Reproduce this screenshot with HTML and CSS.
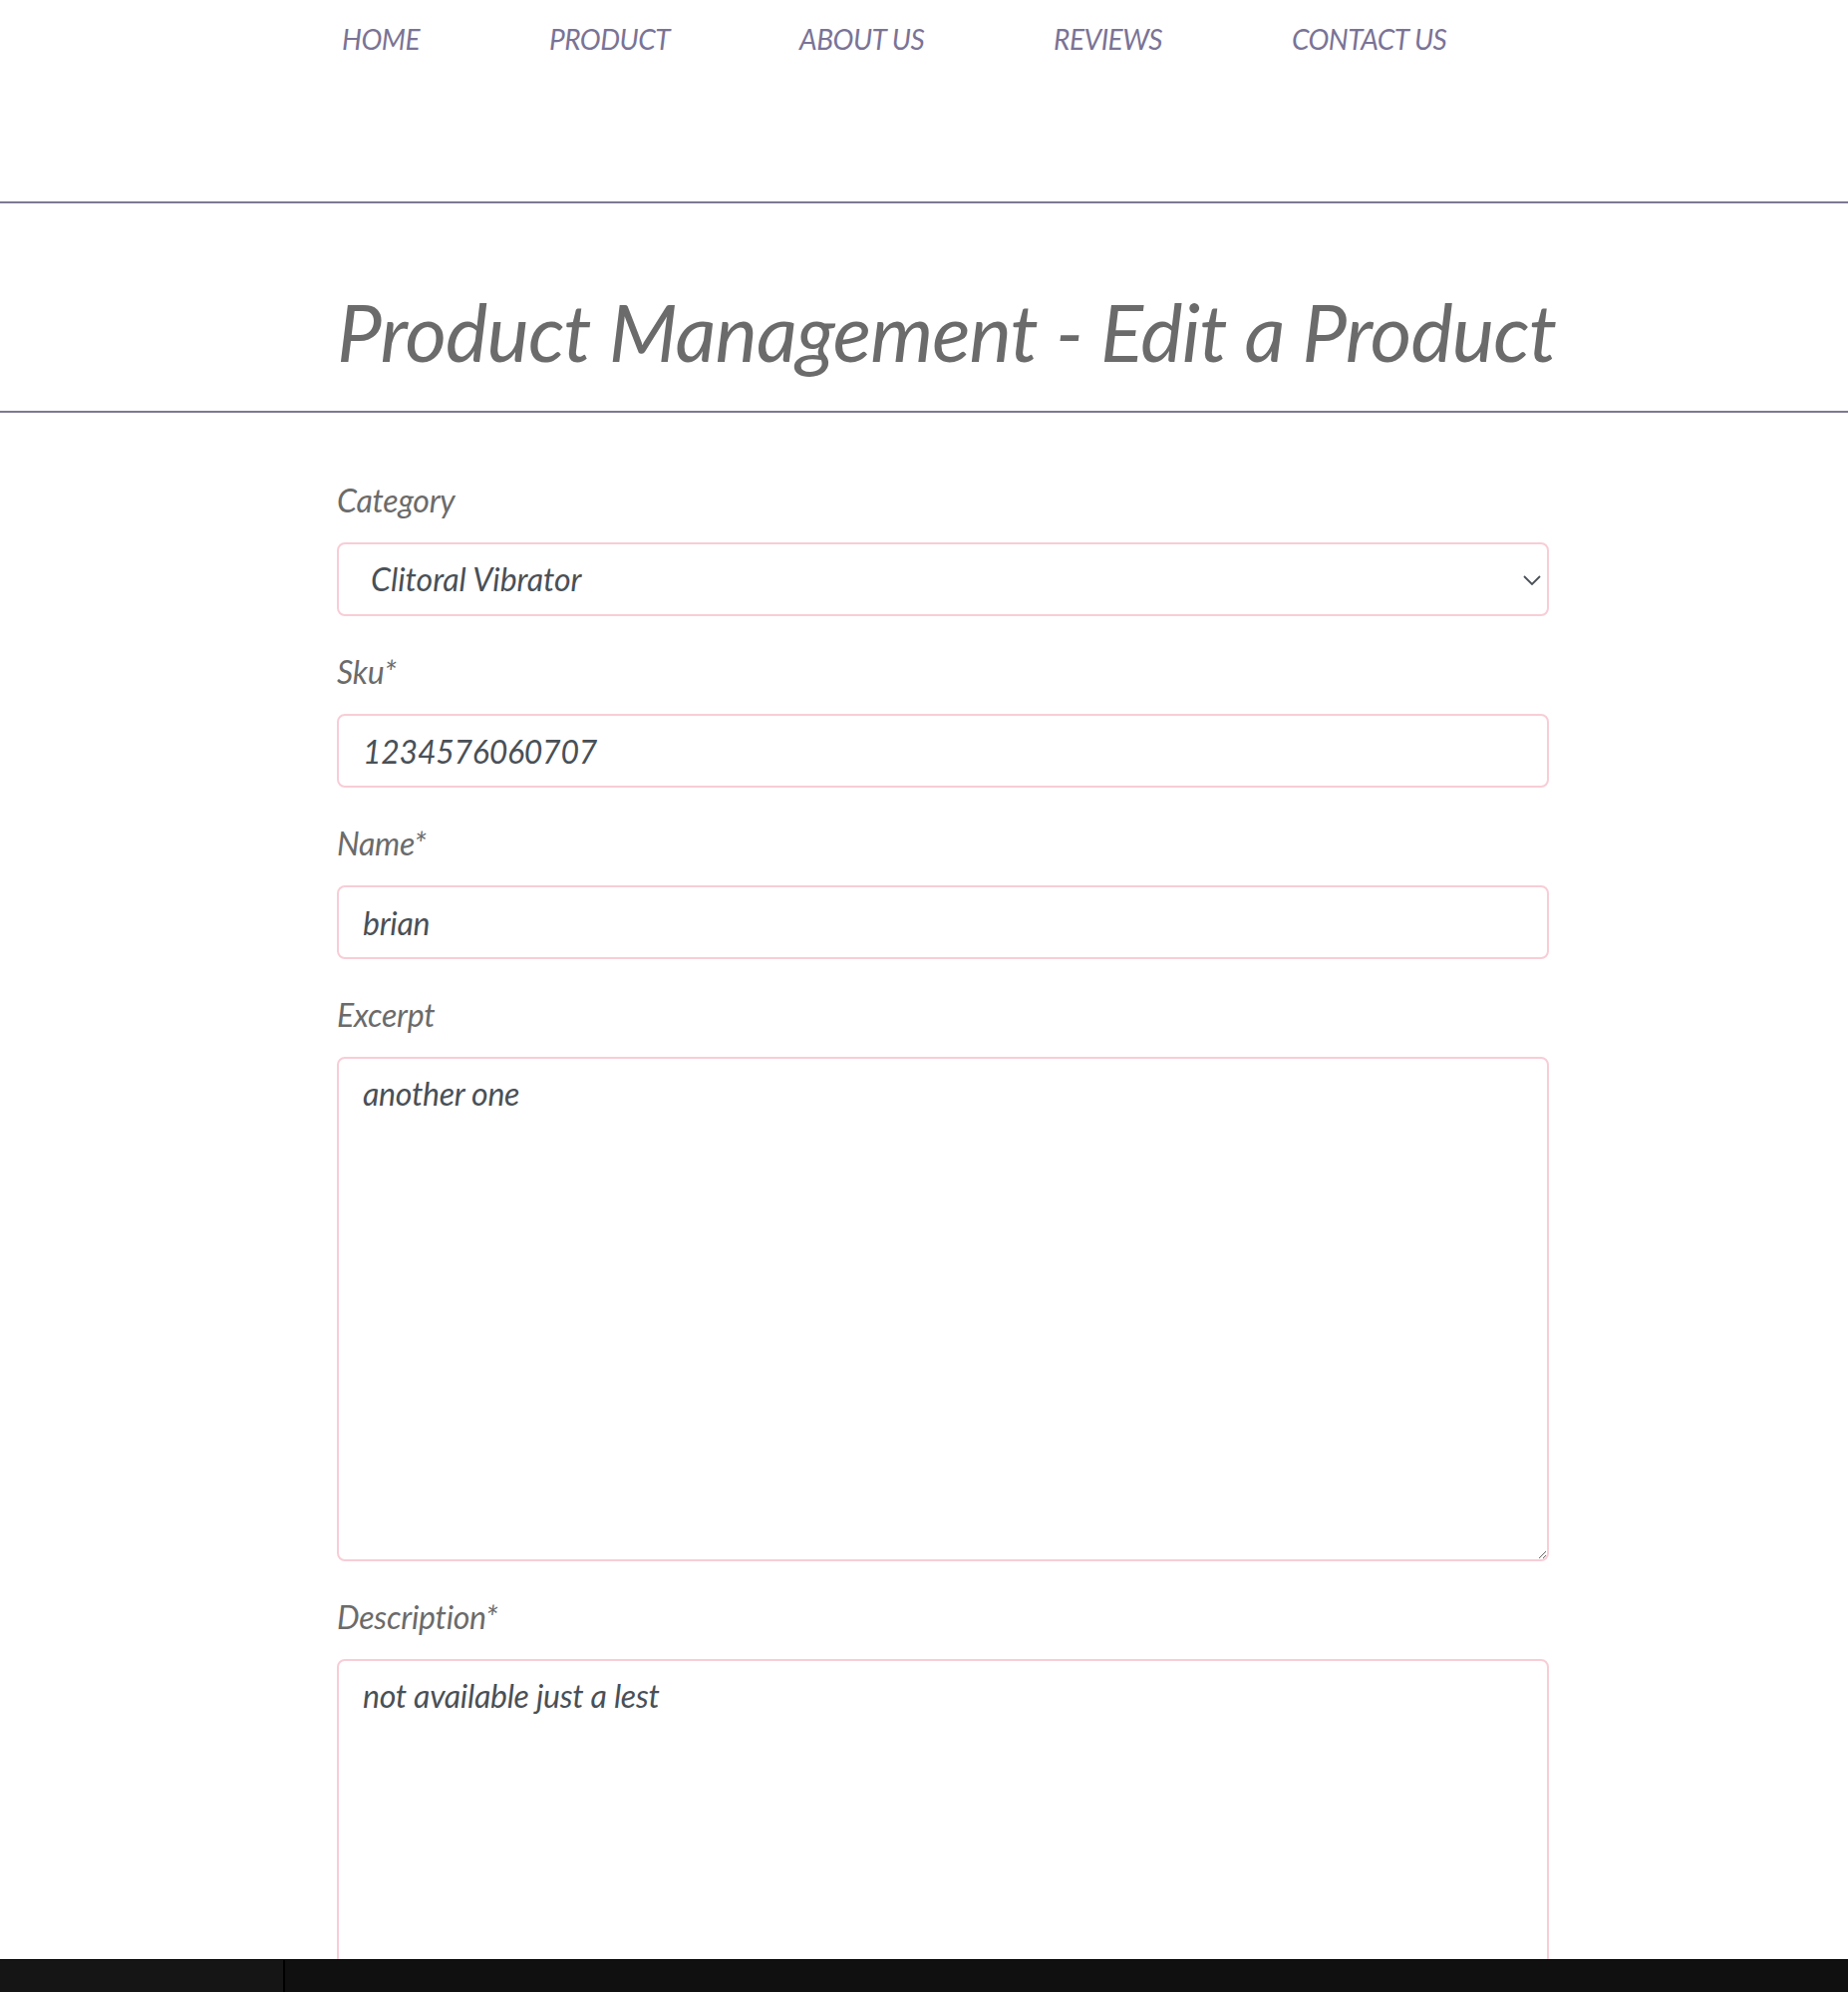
FILE: index.html
```html
<!DOCTYPE html>
<html lang="en">
<head>
<meta charset="utf-8">
<title>Product Management - Edit a Product</title>
<link rel="stylesheet" href="styles.css">
</head>
<body>
<header class="site-header">
  <nav class="main-nav">
    <a href="#" class="nav-link">HOME</a>
    <a href="#" class="nav-link">PRODUCT</a>
    <a href="#" class="nav-link">ABOUT US</a>
    <a href="#" class="nav-link">REVIEWS</a>
    <a href="#" class="nav-link">CONTACT US</a>
  </nav>
</header>
<section class="page-title">
  <div class="container">
    <h1 class="title">Product Management - Edit a Product</h1>
  </div>
</section>
<main class="form-section">
  <div class="container">
    <form class="product-form">
      <div class="form-group">
        <label class="form-label" for="category">Category</label>
        <div class="select-wrap">
          <select id="category" class="form-control select-control">
            <option>Clitoral Vibrator</option>
          </select>
          <svg class="chevron" width="18" height="10" viewBox="0 0 18 10" aria-hidden="true"><path d="M1 1 L9 9 L17 1" fill="none" stroke="#495057" stroke-width="1.8"/></svg>
        </div>
      </div>
      <div class="form-group">
        <label class="form-label" for="sku">Sku*</label>
        <input id="sku" class="form-control" type="text" value="1234576060707">
      </div>
      <div class="form-group">
        <label class="form-label" for="name">Name*</label>
        <input id="name" class="form-control" type="text" value="brian">
      </div>
      <div class="form-group">
        <label class="form-label" for="excerpt">Excerpt</label>
        <textarea id="excerpt" class="form-control text-area">another one</textarea>
      </div>
      <div class="form-group">
        <label class="form-label" for="description">Description*</label>
        <textarea id="description" class="form-control text-area">not available just a lest</textarea>
      </div>
    </form>
  </div>
</main>
<div class="bottom-bar">
  <div class="bar-left"></div>
  <div class="bar-right"></div>
</div>
</body>
</html>
```

FILE: styles.css
```css
html, body {
  margin: 0;
  padding: 0;
}
body {
  font-family: Lato, "Open Sans", sans-serif;
  font-style: italic;
  background: #ffffff;
  height: 1998px;
  overflow: hidden;
}
.site-header {
  height: 202px;
  border-bottom: 2px solid #7d7993;
  box-sizing: content-box;
}
.main-nav {
  display: flex;
  gap: 130px;
  padding: 19px 0 0 343px;
}
.nav-link {
  font-size: 28px;
  line-height: 40px;
  letter-spacing: -0.5px;
  color: #7a7396;
  text-decoration: none;
}
.page-title {
  border-bottom: 2px solid #7d7993;
  padding: 80px 0 32px;
}
.container {
  width: 1216px;
  margin-left: 338px;
}
.title {
  margin: 0;
  padding-right: 8px;
  font-size: 80px;
  line-height: 96px;
  font-weight: 400;
  font-style: italic;
  letter-spacing: -0.9px;
  color: #6b6b6b;
  text-align: center;
  white-space: nowrap;
}
.form-section {
  padding-top: 64px;
}
.form-group {
  margin-bottom: 32px;
}
.form-label {
  display: block;
  font-size: 32px;
  line-height: 48px;
  letter-spacing: -0.25px;
  color: #6b6b6b;
  margin-bottom: 18px;
}
.form-control {
  display: block;
  box-sizing: border-box;
  width: 100%;
  height: 74px;
  margin: 0;
  padding: 0 24px;
  font-family: Lato, "Open Sans", sans-serif;
  font-style: italic;
  font-size: 32px;
  line-height: 48px;
  letter-spacing: -0.25px;
  color: #495057;
  background: #ffffff;
  border: 2px solid #f8cdd6;
  border-radius: 8px;
  outline: none;
}
.select-wrap {
  position: relative;
}
.select-control {
  -webkit-appearance: none;
  appearance: none;
  padding-left: 32px;
  letter-spacing: 0;
}
.chevron {
  position: absolute;
  right: 8px;
  top: 33px;
  pointer-events: none;
}
.text-area {
  height: 506px;
  padding: 11px 24px;
  resize: vertical;
}
.bottom-bar {
  position: fixed;
  left: 0;
  right: 0;
  bottom: 0;
  height: 32px;
  display: flex;
  border-top: 1px solid #050505;
}
.bar-left {
  width: 284px;
  background: #151515;
  border-right: 2px solid #000000;
}
.bar-right {
  flex: 1;
  background: #101010;
}
```
